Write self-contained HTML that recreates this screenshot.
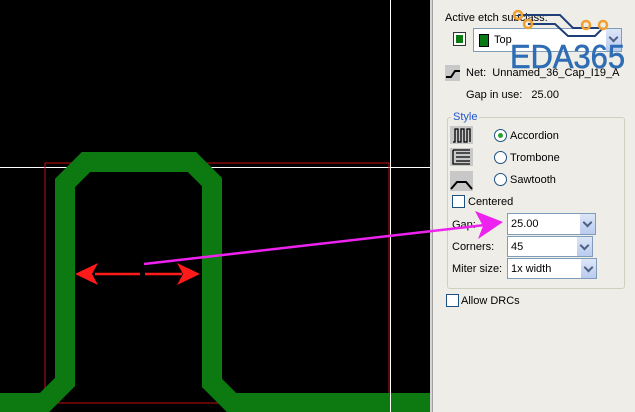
<!DOCTYPE html>
<html><head><meta charset="utf-8"><style>
*{margin:0;padding:0;box-sizing:border-box}
body{width:635px;height:412px;overflow:hidden;background:#000;position:relative;font-family:"Liberation Sans",sans-serif;font-size:11px;color:#000}
.a{position:absolute}
.panel{left:430px;top:0;width:205px;height:412px;background:#eeede8;border-left:2px solid #d4d4d4;box-shadow:inset 1px 0 0 #a0a0a0}
.t{position:absolute;white-space:nowrap;line-height:14px}
.cb{position:absolute;width:13px;height:13px;border:1px solid #1c5180;background:#fff}
.combo{position:absolute;background:#fff;border:1px solid #7f9db9}
.btn{position:absolute;right:0;top:0;bottom:0;width:16px;background:linear-gradient(#dde6f8,#b9cbf0);border-left:1px solid #fff}
.btn:after{content:"";position:absolute;left:4px;top:5px;width:5px;height:5px;border-right:2px solid #4d6185;border-bottom:2px solid #4d6185;transform:rotate(45deg)}
.rad{position:absolute;width:13px;height:13px;border-radius:50%;border:1px solid #1c5180;background:#fff}
</style></head><body>
<svg class="a" style="left:0;top:0" width="430" height="412">
<line x1="0" y1="167.5" x2="430" y2="167.5" stroke="#fff" stroke-width="1"/>
<rect x="45" y="163" width="344" height="240" fill="none" stroke="#c01010" stroke-width="1" shape-rendering="crispEdges"/>
<polyline points="-5,403 44,403 65,382 65,183 86,162 192,162 212,182 212,383 232,403 432,403" fill="none" stroke="#0c7a10" stroke-width="20" stroke-linejoin="miter"/>
<line x1="390.5" y1="0" x2="390.5" y2="412" stroke="#fff" stroke-width="1"/>
<line x1="95" y1="274" x2="140" y2="274" stroke="#ff1a1a" stroke-width="2.5"/>
<line x1="145" y1="274" x2="182" y2="274" stroke="#ff1a1a" stroke-width="2.5"/>
<polygon points="75,274 98,263 92,274 98,285" fill="#ff1a1a"/>
<polygon points="200,274 177,263 183,274 177,285" fill="#ff1a1a"/>
</svg>
<div class="a panel"></div>
<div class="t" style="left:445px;top:11px">Active etch subclass:</div>
<div class="a" style="left:453px;top:32px;width:13px;height:14px;background:#fff;border:1px solid #333;padding:2px"><div style="width:100%;height:100%;background:#0a7a14"></div></div>
<div class="combo" style="left:473px;top:28px;width:149px;height:24px"><div class="a" style="left:5px;top:5px;width:10px;height:13px;background:#0a7a14;border:1px solid #000"></div><div class="t" style="left:20px;top:4px">Top</div><div class="btn"></div></div>
<svg class="a" style="left:505px;top:8px" width="130" height="65">
<polyline points="13,7 55,7 68,20 95,20" fill="none" stroke="#1e3f78" stroke-width="2"/>
<polyline points="23,16 50,16 63,28 90,28 98,20" fill="none" stroke="#1e3f78" stroke-width="2"/>
<circle cx="13" cy="7" r="4" fill="none" stroke="#f0a030" stroke-width="2.5"/>
<circle cx="23" cy="16" r="4" fill="none" stroke="#f0a030" stroke-width="2.5"/>
<circle cx="81" cy="17" r="4" fill="none" stroke="#f0a030" stroke-width="2.5"/>
<circle cx="98" cy="17" r="4" fill="none" stroke="#f0a030" stroke-width="2.5"/>
<text x="5" y="60" font-family="Liberation Sans,sans-serif" font-size="33" fill="#2e6db4" textLength="115" lengthAdjust="spacingAndGlyphs" stroke="#2e6db4" stroke-width="0.6">EDA365</text>
</svg>
<svg class="a" style="left:445px;top:65px" width="15" height="16"><rect width="15" height="16" fill="#c8c8c8"/><polyline points="1,12 6,12 10,6 15,6" fill="none" stroke="#000" stroke-width="2"/></svg>
<div class="t" style="left:466px;top:66px">Net:&nbsp; Unnamed_36_Cap_I19_A</div>
<div class="t" style="left:466px;top:88px">Gap in use:&nbsp;&nbsp; 25.00</div>
<div class="a" style="left:447px;top:117px;width:178px;height:172px;border:1px solid #d0d0bf;border-radius:3px"></div>
<div class="t" style="left:451px;top:110px;background:#eeede8;color:#2255cc;padding:0 2px">Style</div>
<svg class="a" style="left:450px;top:126px" width="23" height="66">
<rect width="23" height="18" fill="#c8c8c8"/><polyline points="3,16 5,16 5,3 8,3 8,16 11,16 11,3 14,3 14,16 17,16 17,3 20,3 20,16" fill="none" stroke="#000" stroke-width="1.3"/>
<rect y="22" width="23" height="18" fill="#c8c8c8"/><path d="M3 24V38H20M6 27H20M6 31H20M6 35H20M3 24H20" fill="none" stroke="#000" stroke-width="1.3"/>
<rect y="45" width="23" height="20" fill="#c8c8c8"/><polyline points="1,63 7,56 16,56 22,63" fill="none" stroke="#000" stroke-width="2"/>
</svg>
<div class="rad" style="left:494px;top:129px"><div class="a" style="left:3px;top:3px;width:5px;height:5px;border-radius:50%;background:#2ea02e"></div></div>
<div class="t" style="left:510px;top:129px">Accordion</div>
<div class="rad" style="left:494px;top:151px"></div>
<div class="t" style="left:510px;top:151px">Trombone</div>
<div class="rad" style="left:494px;top:173px"></div>
<div class="t" style="left:510px;top:173px">Sawtooth</div>
<div class="cb" style="left:452px;top:195px"></div>
<div class="t" style="left:468px;top:195px">Centered</div>
<div class="t" style="left:452px;top:218px">Gap:</div>
<div class="combo" style="left:507px;top:213px;width:89px;height:22px"><div class="t" style="left:3px;top:3px">25.00</div><div class="btn"></div></div>
<div class="t" style="left:452px;top:240px">Corners:</div>
<div class="combo" style="left:507px;top:236px;width:86px;height:21px"><div class="t" style="left:3px;top:3px">45</div><div class="btn"></div></div>
<div class="t" style="left:452px;top:262px">Miter size:</div>
<div class="combo" style="left:507px;top:258px;width:90px;height:21px"><div class="t" style="left:3px;top:3px">1x width</div><div class="btn"></div></div>
<div class="cb" style="left:446px;top:294px"></div>
<div class="t" style="left:461px;top:294px">Allow DRCs</div>
<svg class="a" style="left:0;top:0" width="635" height="412">
<line x1="144" y1="264" x2="485" y2="225" stroke="#ee22ee" stroke-width="2.5"/>
<polygon points="503,222 475,211 483,226 478,239" fill="#ee22ee"/>
</svg>
</body></html>
